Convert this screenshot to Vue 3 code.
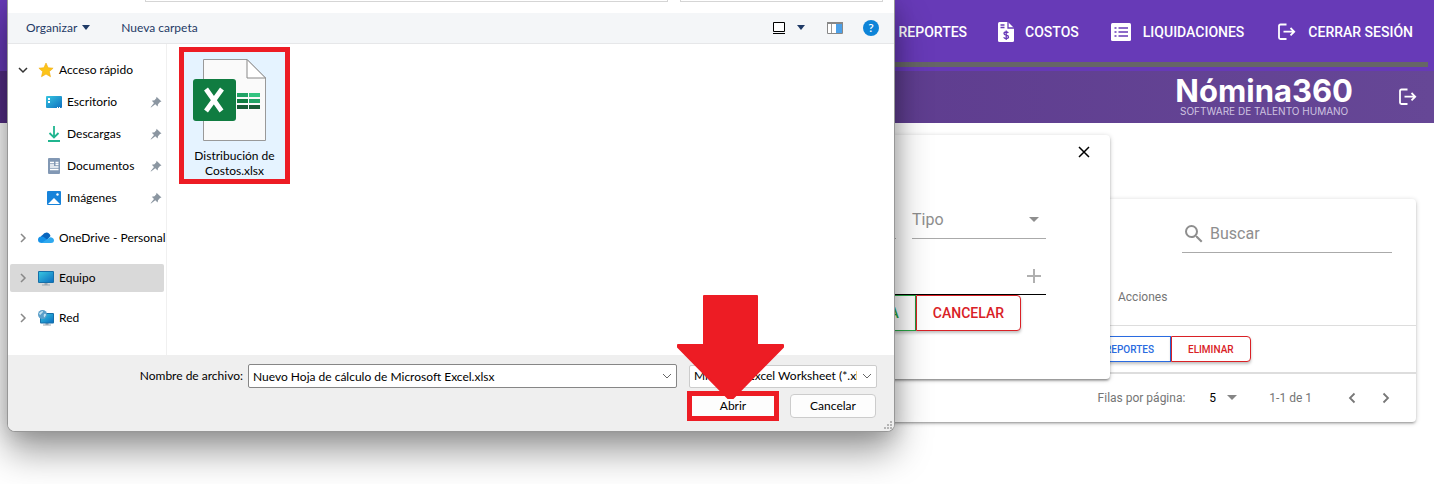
<script setup>
import { ref } from 'vue'

const quickAccess = [
  { id: 'desktop', label: 'Escritorio' },
  { id: 'downloads', label: 'Descargas' },
  { id: 'documents', label: 'Documentos' },
  { id: 'pictures', label: 'Imágenes' },
]
const fileName = ref('Nuevo Hoja de cálculo de Microsoft Excel.xlsx')
const search = ref('')
const concept = ref('')
const attachment = ref('')
const rows = ref('5')
</script>

<template>
  <div class="page">
    <nav class="topbar">
      <a href="#" class="nav-link">Reportes</a>
      <a href="#" class="nav-link">
        <svg width="18" height="24" viewBox="0 0 18 24"><path fill="#fff" d="M1 3.500q0-1.500 1.500-1.500H11l6 6v12.500q0 1.500-1.500 1.500h-13Q1 22 1 20.500z" /><path fill="none" stroke="#673ab7" stroke-width="1.300" d="M3.500 5H7.500M3.500 7.500H7.500M11 2v6h6M11.300 12.800Q10.800 12 9.200 12 7 12 7 13.600 7 15 9.200 15.200 11.500 15.500 11.500 17 11.500 18.500 9.200 18.500 7.300 18.500 6.700 17.300M9.200 10.500v9.500" /></svg>
        <span>Costos</span>
      </a>
      <a href="#" class="nav-link">
        <svg width="24" height="24" viewBox="0 0 24 24"><rect x="2" y="3" width="20" height="18" rx="1.500" fill="#fff" /><path stroke="#673ab7" stroke-width="1.600" d="M5.500 8h2M5.500 12h2M5.500 16h2M9.500 8h9.500M9.500 12h9.500M9.500 16h9.500" /></svg>
        <span>Liquidaciones</span>
      </a>
      <a href="#" class="nav-link">
        <svg width="24" height="24" viewBox="0 0 24 24" fill="none" stroke="#fff" stroke-width="1.800"><path d="M12.500 4.500H6.500Q5 4.500 5 6v11.500Q5 19 6.500 19h6M9.500 11.700H20M16.500 8l3.700 3.700-3.700 3.700" /></svg>
        <span>Cerrar sesión</span>
      </a>
      <div class="scrollbar"></div>
    </nav>

    <header class="brandbar">
      <div class="brand">
        <strong>Nómina360</strong>
        <small>SOFTWARE DE TALENTO HUMANO</small>
      </div>
      <button class="plain" aria-label="Salir">
        <svg width="24" height="24" viewBox="0 0 24 24" fill="none" stroke="#fff" stroke-width="1.800"><path d="M12.500 4.500H6.500Q5 4.500 5 6v11.500Q5 19 6.500 19h6M9.500 11.700H20M16.500 8l3.700 3.700-3.700 3.700" /></svg>
      </button>
    </header>

    <main class="content">
      <section class="card">
        <div class="search-row">
          <label class="search">
            <svg width="24" height="24" viewBox="0 0 24 24" fill="#8e8e8e"><path d="M15.500 14h-.79l-.28-.27A6.470 6.470 0 0 0 16 9.500 6.500 6.500 0 1 0 9.500 16c1.610 0 3.090-.59 4.230-1.570l.27.28v.79l5 4.990L20.490 19l-4.990-5zm-6 0C7.010 14 5 11.990 5 9.500S7.010 5 9.500 5 14 7.010 14 9.500 11.990 14 9.500 14z" /></svg>
            <input v-model="search" type="text" placeholder="Buscar" aria-label="Buscar" />
          </label>
        </div>
        <table>
          <thead>
            <tr><td></td><th class="actions">Acciones</th></tr>
          </thead>
          <tbody>
            <tr>
              <td></td>
              <td class="actions">
                <div class="group small">
                  <button class="blue">Reportes</button>
                  <button class="red">Eliminar</button>
                </div>
              </td>
            </tr>
          </tbody>
        </table>
        <footer class="pager">
          <label for="rows">Filas por página:</label>
          <div class="rows">
            <select id="rows" v-model="rows"><option>5</option><option>10</option></select>
            <svg width="10" height="5" viewBox="0 0 10 5"><path fill="#858585" d="M0 0h10L5 5z" /></svg>
          </div>
          <span class="range">1-1 de 1</span>
          <div class="steps">
            <button class="plain" aria-label="Página anterior"><svg width="10" height="12" viewBox="0 0 10 12"><path d="M7.500 1.500 3 6l4.500 4.500" fill="none" stroke="#777" stroke-width="1.800" /></svg></button>
            <button class="plain" aria-label="Página siguiente"><svg width="10" height="12" viewBox="0 0 10 12"><path d="M2.500 1.500 7 6l-4.500 4.500" fill="none" stroke="#777" stroke-width="1.800" /></svg></button>
          </div>
        </footer>
      </section>
    </main>

    <section class="modal" role="dialog" aria-label="Cargar archivo">
      <button class="plain close" aria-label="Cerrar"><svg width="12" height="12" viewBox="0 0 12 12"><path d="M1 1l10 10M11 1 1 11" stroke="#000" stroke-width="1.500" /></svg></button>
      <div class="fields">
        <input v-model="concept" class="line" type="text" aria-label="Concepto" />
        <div class="type">
          <select aria-label="Tipo"><option>Tipo</option></select>
          <svg width="10" height="5" viewBox="0 0 10 5"><path fill="#8e8e8e" d="M0 0h10L5 5z" /></svg>
        </div>
      </div>
      <div class="attach">
        <input v-model="attachment" type="text" aria-label="Archivo" />
        <button class="plain" aria-label="Agregar"><svg width="24" height="24" viewBox="0 0 24 24"><path d="M12 5v14M5 12h14" stroke="#b0b0b0" stroke-width="2" /></svg></button>
      </div>
      <div class="group large">
        <button class="green">Carga</button>
        <button class="red">Cancelar</button>
      </div>
    </section>

    <section class="explorer" role="dialog" aria-label="Abrir">
      <div class="address"><span class="path"></span><span class="find"></span></div>
      <div class="toolbar">
        <button class="plain organize">Organizar <svg width="8" height="5" viewBox="0 0 8 5"><path fill="#1f3a66" d="M0 0h8L4 5z" /></svg></button>
        <button class="plain">Nueva carpeta</button>
        <div class="tools">
          <button class="plain" aria-label="Vista"><svg width="14" height="14" viewBox="0 0 14 14"><path d="M1.500 1.500h11v9h-11z" fill="#fff" stroke="#000" /><path d="M1 12.500h12" stroke="#000" /></svg></button>
          <button class="plain caret" aria-label="Más vistas"><svg width="8" height="5" viewBox="0 0 8 5"><path fill="#1f3a66" d="M0 0h8L4 5z" /></svg></button>
          <button class="plain preview" aria-label="Panel de vista previa"><svg width="16" height="12" viewBox="0 0 16 12"><path d="M.5.5h15v11H.5z" fill="#fff" stroke="#888" /><path d="M0 1h16" stroke="#888" stroke-width="2" /><path d="M4.500 2v9" stroke="#999" /><path d="M9 2h6v9H9z" fill="#4ba0e8" /></svg></button>
          <button class="plain help" aria-label="Ayuda">?</button>
        </div>
      </div>

      <div class="browser">
        <aside class="tree">
          <div class="row">
            <svg class="chev" width="10" height="8" viewBox="0 0 10 8"><path d="M1 2l4 4 4-4" fill="none" stroke="#333" stroke-width="1.500" /></svg>
            <svg width="16" height="16" viewBox="0 0 16 16"><path fill="#fcc419" stroke="#f0a90c" stroke-width=".6" d="M8 1l2.100 4.700 5 .5-3.800 3.400 1.200 5.100L8 12.100l-4.500 2.600 1.200-5.100L.9 6.200l5-.5z" /></svg>
            <span>Acceso rápido</span>
          </div>
          <div v-for="item in quickAccess" :key="item.id" class="row child">
            <svg v-if="item.id === 'desktop'" width="16" height="16" viewBox="0 0 16 16"><defs><linearGradient id="desk" x2="1" y2="1"><stop stop-color="#37c5e0" /><stop offset="1" stop-color="#0c6fc0" /></linearGradient></defs><rect y="2" width="16" height="12" rx="1" fill="url(#desk)" /><path d="M2 4h2v2H2zM2 7h2v2H2zM11 13h1v1h-1zM13 13h1v1h-1z" fill="#fff" /></svg>
            <svg v-else-if="item.id === 'downloads'" width="16" height="16" viewBox="0 0 16 16" fill="none" stroke="#20b58f" stroke-width="1.800"><path d="M8 0v11M3.500 7 8 11.500 12.500 7M2 15h12" /></svg>
            <svg v-else-if="item.id === 'documents'" width="16" height="16" viewBox="0 0 16 16"><rect x="2" width="12" height="16" rx="1" fill="#8298b4" /><path d="M4 4.500h4M4 7h4M9.500 4.500h3M9.500 6.500h3M4 9h8.500M4 11.500h8.500" stroke="#fff" stroke-width="1.300" /></svg>
            <svg v-else width="16" height="16" viewBox="0 0 16 16"><rect x="1" y="1" width="14" height="14" rx="1" fill="#1783da" /><path d="M2 14l6-6 6 6z" fill="#fff" /><circle cx="11.500" cy="4.500" r="1.200" fill="#fff" /></svg>
            <span>{{ item.label }}</span>
            <svg class="pin" width="12" height="12" viewBox="0 0 12 12"><path fill="#8b96a1" d="M6.500.8 11.500 5.500 10 6 8 8.300 7.600 10.500 5.300 8.300 1 11.600.6 11.200 4 7 1.800 4.700 4.500 4.200 6.300 2.300z" /></svg>
          </div>
          <div class="row root">
            <svg class="chev" width="10" height="10" viewBox="0 0 10 10"><path d="M3 1l4 4-4 4" fill="none" stroke="#888" stroke-width="1.500" /></svg>
            <svg width="16" height="16" viewBox="0 0 16 16"><path fill="#0865bd" d="M3 9Q2 6.500 4.500 5 6 2.500 8.500 2.500 11.500 2.500 12.500 6L9 10z" /><path fill="#1491e8" d="M4 13Q0 13 0 9.800 0 7 3.300 6.600 5.500 6.500 7 8l6 5z" /><path fill="#2fa9ef" d="M3.500 12.900 12 7.300Q16 7.500 16 10.500 15.800 13 13 13z" /></svg>
            <span>OneDrive - Personal</span>
          </div>
          <div class="row root selected">
            <svg class="chev" width="10" height="10" viewBox="0 0 10 10"><path d="M3 1l4 4-4 4" fill="none" stroke="#888" stroke-width="1.500" /></svg>
            <svg width="16" height="16" viewBox="0 0 16 16"><path fill="#9aa7b2" d="M6.500 13h3v1.500H12v1H4v-1h2.500z" /><rect y="1" width="16" height="12" rx="1" fill="#166fa8" /><rect x="1" y="2" width="14" height="10" fill="url(#desk)" /></svg>
            <span>Equipo</span>
          </div>
          <div class="row root">
            <svg class="chev" width="10" height="10" viewBox="0 0 10 10"><path d="M3 1l4 4-4 4" fill="none" stroke="#888" stroke-width="1.500" /></svg>
            <svg width="16" height="16" viewBox="0 0 16 16"><path fill="#9aa7b2" d="M7.500 13h3v1.500H13v1H5v-1h2.500z" /><rect x="2" y="3" width="14" height="10.500" rx="1" fill="#166fa8" /><rect x="3" y="4" width="12" height="8.500" fill="url(#desk)" /><circle cx="4.500" cy="4.500" r="4.500" fill="#5b9fc9" /><path fill="#c3e2f0" d="M1 3.500Q3 .5 5 1 5 3 3 4 2 6 1 3.500zM6 4q2-1 2 1L6.500 7.500Q5 6 6 4z" /></svg>
            <span>Red</span>
          </div>
        </aside>

        <div class="files">
          <button class="file">
            <svg width="76" height="84" viewBox="0 0 76 84">
              <path d="M12.500 1.500H56L74.500 20v62.500h-62z" fill="#fafafa" stroke="#999" />
              <path d="M56 1.500V20h18.500z" fill="#fff" stroke="#888" />
              <path fill="#21a366" d="M46 35h11v4H46zM58 41h11v4H58z" /><path fill="#33c481" d="M58 35h11v4H58z" /><path fill="#107c41" d="M46 41h11v4H46z" /><path fill="#185c37" d="M46 47h11v4H46zM58 47h11v4H58z" />
              <rect x="2" y="21" width="43" height="42" rx="3" fill="#107c41" />
              <path fill="none" stroke="#fff" stroke-width="4.800" d="M15 31 30.500 53M31 31 15 53" />
            </svg>
            <span>Distribución de Costos.xlsx</span>
          </button>
        </div>
      </div>

      <footer class="bottom">
        <div class="line-one">
          <label for="filename">Nombre de archivo:</label>
          <div class="combo name">
            <input id="filename" v-model="fileName" type="text" />
            <svg width="10" height="6" viewBox="0 0 10 6"><path d="M1 1l4 4 4-4" fill="none" stroke="#666" /></svg>
          </div>
          <div class="combo kind">
            <select aria-label="Tipo de archivo"><option>Microsoft Excel Worksheet (*.xlsx)</option></select>
            <svg width="10" height="6" viewBox="0 0 10 6"><path d="M1 1l4 4 4-4" fill="none" stroke="#666" /></svg>
          </div>
        </div>
        <div class="line-two">
          <div class="marked">
            <button>Abrir</button>
            <svg class="arrow" width="108" height="105" viewBox="0 0 108 105"><path fill="#ed1c24" stroke="#ed1c24" stroke-width="2" stroke-linejoin="round" d="M27 1H80V50H106V52L56 103H51L1 52V50H27z" /></svg>
          </div>
          <button>Cancelar</button>
        </div>
        <svg class="grip" width="8" height="8" viewBox="0 0 8 8"><path fill="#b5b5b5" d="M6 0h2v2H6zM3 3h2v2H3zM6 3h2v2H6zM0 6h2v2H0zM3 6h2v2H3zM6 6h2v2H6z" /></svg>
      </footer>
    </section>
  </div>
</template>

<style>
body { background: #fff; }
</style>

<style scoped>
* { box-sizing: border-box; }
button, input, select { font: inherit; color: inherit; margin: 0; }
input, select { background: transparent; border: 0; outline: 0; padding: 0; min-width: 0; appearance: none; }
svg { display: block; flex: none; }
.plain { background: none; border: 0; padding: 0; display: flex; align-items: center; justify-content: center; }
.page { position: relative; min-height: 100vh; overflow: hidden; font-family: Roboto, sans-serif; }

.topbar { position: relative; height: 71px; padding: 0 21px 7px 8px; background: #673ab7; display: flex; align-items: center; justify-content: flex-end; gap: 30px; }
.nav-link { display: flex; align-items: center; gap: 10px; color: #fff; text-decoration: none; text-transform: uppercase; font-size: 14px; font-weight: 500; }
.scrollbar { position: absolute; left: 8px; right: 6px; bottom: 4px; height: 5px; background: #666; }
.brandbar { height: 52px; padding: 0 15px 0 8px; display: flex; align-items: center; justify-content: flex-end; gap: 42px; background: linear-gradient(90deg, #532d85, #664796); }
.brand { color: #fff; padding-bottom: 2px; display: flex; flex-direction: column; align-items: center; font-family: Inter, sans-serif; }
.brand strong { font-size: 31px; line-height: 30px; font-weight: 700; }
.brand small { font-size: 10px; line-height: 10px; color: #cfc3e0; }

.content { padding: 76px 18px 62px; }
.card { background: #fff; border-radius: 4px; box-shadow: 0 1px 5px rgba(0, 0, 0, .2), 0 2px 2px rgba(0, 0, 0, .14), 0 3px 1px -2px rgba(0, 0, 0, .12); }
.search-row { display: flex; justify-content: flex-end; padding: 14px 24px; height: 68px; }
.search { width: 210px; height: 40px; display: flex; align-items: center; gap: 4px; border-bottom: 1px solid #aaa; padding-top: 2px; }
.search input { flex: 1; font-size: 16px; }
.search input::placeholder { color: #8e8e8e; opacity: 1; }
table { width: 100%; border-collapse: collapse; }
td, th { padding: 0; border-bottom: 1px solid #ddd; }
thead tr { height: 58px; }
tbody tr { height: 47px; }
th.actions { width: 343px; padding: 2px 0 0 45px; text-align: left; font-size: 12px; font-weight: 400; color: #757575; }
td.actions { padding-left: 15px; }
.group { display: flex; }
.group button { background: #fff; border: 1px solid; padding: 0 16px; text-transform: uppercase; font-weight: 500; box-shadow: 0 2px 3px rgba(0, 0, 0, .25); }
.group button:last-child { border-radius: 0 4px 4px 0; }
.small button { height: 26px; font-size: 10px; padding-top: 2px; }
.large button { height: 36px; font-size: 14px; }
.group .blue { color: #2a6be0; }
.group .red { color: #d92126; }
.group .green { color: #28a745; }
.pager { border-top: 1px solid #ddd; height: 49px; padding: 0 18px; display: flex; align-items: center; justify-content: flex-end; font-size: 12px; color: #757575; }
.rows { margin-left: 24px; display: flex; align-items: center; gap: 8px; color: #000; }
.rows select { width: 10px; height: 24px; }
.range { margin-left: 32px; }
.steps { display: flex; gap: 10px; margin-left: 28px; }
.steps button { width: 24px; height: 24px; }

.modal { position: absolute; top: 135px; left: 324px; right: 324px; padding: 11px 64px 48px; background: #fff; border-radius: 4px; box-shadow: 0 1px 5px rgba(0, 0, 0, .2), 0 2px 2px rgba(0, 0, 0, .24), 0 3px 1px -2px rgba(0, 0, 0, .12); }
.close { width: 12px; height: 12px; margin: 0 -44px 0 auto; }
.fields { display: flex; gap: 16px; margin-top: 41px; }
.line { flex: 1; height: 40px; border-bottom: 1px solid #aaa; }
.type { width: 134px; height: 40px; display: flex; align-items: center; border-bottom: 1px solid #aaa; color: #8e8e8e; font-size: 16px; padding: 2px 7px 0 0; }
.type select { flex: 1; height: 24px; }
.attach { margin-top: 16px; height: 40px; padding-top: 2px; display: flex; align-items: center; border-bottom: 1px solid #000; }
.attach input { flex: 1; }
.large { justify-content: flex-end; padding-right: 25px; }

.explorer { position: absolute; top: 0; left: 7px; right: 539px; color: #000; background: #fff; border: 1px solid #979797; border-top: 0; border-radius: 0 0 8px 8px; box-shadow: 0 20px 36px rgba(0, 0, 0, .38), 0 2px 20px rgba(0, 0, 0, .16); font-family: Lato, "Open Sans", sans-serif; font-size: 12px; }
.address { height: 13px; display: flex; gap: 12px; padding: 0 11px 0 137px; }
.address span { height: 2px; border: 1px solid #d5d5d5; border-top: 0; }
.path { flex: 1; }
.find { width: 203px; }
.toolbar { height: 31px; background: #f4f6f8; border-bottom: 1px solid #e6e7e9; display: flex; align-items: center; gap: 31px; padding: 0 15px 1px 18px; color: #1f3a66; }
.organize { gap: 5px; }
.tools { margin-left: auto; display: flex; align-items: center; }
.caret { margin-left: 11px; }
.preview { margin: 0 20px 0 22px; }
.plain.help { width: 16px; height: 16px; border-radius: 50%; color: #fff; font-weight: 600; background: #0d84d8; }
.browser { display: flex; height: 311px; }
.tree { width: 159px; padding: 12px 2px 0; border-right: 1px solid #f0f0f0; white-space: nowrap; }
.row { height: 28px; margin-bottom: 4px; display: flex; align-items: center; gap: 5px; padding-left: 8px; border-radius: 2px; }
.row span { padding-bottom: 2px; }
.chev { margin-right: 5px; }
.child { padding: 0 2px 0 36px; }
.pin { margin-left: auto; }
.root { margin: 12px 0; }
.selected { background: #d9d9d9; }
.files { flex: 1; padding: 3px 12px; }
.file { width: 111px; height: 137px; padding: 6px 0 0; display: flex; flex-direction: column; align-items: center; gap: 6px; line-height: 15px; background: #e5f3ff; border: 5px solid #ed1c24; }
.file svg { margin-right: 12px; }
.bottom { position: relative; background: #efefef; border-radius: 0 0 7px 7px; padding: 9px 17px 13px; }
.line-one { display: flex; align-items: center; height: 24px; }
.line-one label { width: 218px; text-align: right; margin-right: 5px; padding-bottom: 2px; }
.combo { display: flex; align-items: center; background: #fff; border: 1px solid #868686; border-radius: 2px; padding: 0 4px; }
.combo input, .combo select { flex: 1; }
.combo select { overflow: hidden; white-space: nowrap; text-overflow: clip; margin-right: 5px; padding-bottom: 2px; }
.name { flex: 1; height: 24px; }
.kind { width: 188px; height: 23px; margin-left: 12px; border-color: #ccc; }
.line-two { display: flex; justify-content: flex-end; gap: 14px; margin-top: 6px; padding-right: 1px; }
.line-two button { width: 86px; height: 24px; padding: 0 0 2px; background: #fdfdfd; border: 1px solid #ccc; border-radius: 4px; }
.marked { position: relative; }
.marked::after { content: ""; position: absolute; inset: -3px; border: 5px solid #ed1c24; }
.arrow { position: absolute; left: -13px; top: -99px; z-index: 1; }
.grip { position: absolute; right: 2px; bottom: 2px; }
</style>
